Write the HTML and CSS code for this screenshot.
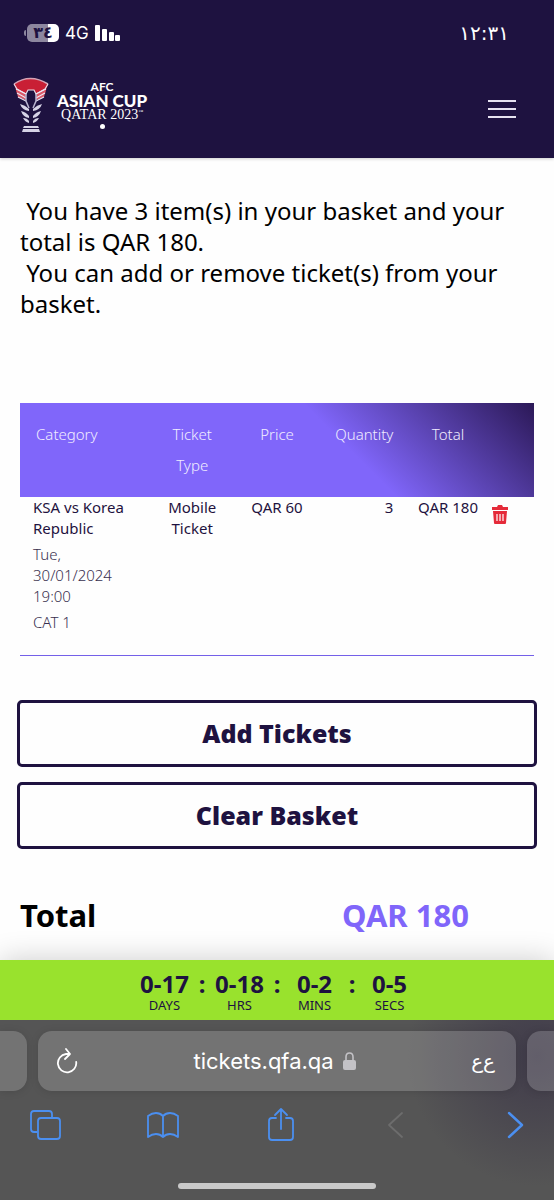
FILE: index.html
```html
<!DOCTYPE html>
<html lang="en">
<head>
    <meta charset="UTF-8">
    <meta name="viewport" content="width=device-width, initial-scale=1.0">
    <title>Basket - AFC Asian Cup Qatar 2023</title>
    <link rel="stylesheet" href="styles.css">
</head>
<body>
    <header class="header">
        <div class="status">
            <div class="status-left">
                <span class="battery"><span class="battery-level">٣٤</span></span>
                <span class="network">4G</span>
                <svg class="signal" width="26" height="17" viewBox="0 0 26 17" fill="#fff">
                    <rect x="0" y="0" width="5" height="16" rx="1"/>
                    <rect x="7" y="4" width="5" height="12" rx="1"/>
                    <rect x="14" y="7" width="5" height="9" rx="1"/>
                    <rect x="20" y="10" width="5" height="6" rx="1"/>
                </svg>
            </div>
            <span class="clock">١٢:٣١</span>
        </div>
        <div class="brand-bar">
            <a href="#" class="brand" aria-label="AFC Asian Cup Qatar 2023">
                <svg width="36" height="56" viewBox="0 0 36 56">
                    <path d="M1 7Q17-4 35 7L32 16 24 17 21 13H15L12 17 4 16Z" fill="#c91f35"/>
                    <path d="M1 7Q17-4 35 7" fill="none" stroke="#d5a3b5" stroke-width="1.5"/>
                    <path d="M1 7l3 5 9 5 2-4h6l2 4 9-5 3-5" fill="none" stroke="#e9dfea" stroke-width="1.2"/>
                    <path d="M3 13l10 4v6L5 20zM33 13l-10 4v6l8-3z" fill="#d95868"/>
                    <path d="M3 12l10 5M4 16l9 5M5 20l8 4M33 12l-10 5M32 16l-9 5M31 20l-8 4" stroke="#eee8f4" stroke-width="1.2"/>
                    <path d="M13 17v7l3 7M23 17v7l-3 7" fill="none" stroke="#b9b4d0" stroke-width="1.5"/>
                    <path d="M7 27q2 6 9 7v-2q-4-4-9-5zM29 27q-2 6-9 7v-2q4-4 9-5zM8 34q2 6 8 7v-2q-3-4-8-5zM28 34q-2 6-8 7v-2q3-4 8-5zM10 41q2 4 6 5v-2q-2-3-6-3zM26 41q-2 4-6 5v-2q2-3 6-3z" fill="#d6d3e6"/>
                    <path d="M11 49h14l1 2H10zM10 52h16l1 3H9z" fill="#d6d3e6"/>
                </svg>
                <span class="brand-text">
                    <span class="brand-afc">AFC</span>
                    <span class="brand-cup">ASIAN CUP</span>
                    <span class="brand-qatar">QATAR 2023<sup>™</sup></span>
                    <span class="brand-dot"></span>
                </span>
            </a>
            <button class="menu" aria-label="Menu"><span></span><span></span><span></span></button>
        </div>
    </header>

    <main class="basket">
        <p class="intro">&nbsp;You have 3 item(s) in your basket and your total is QAR 180.<br>&nbsp;You can add or remove ticket(s) from your basket.</p>
        <table class="items">
            <thead>
                <tr>
                    <th class="col-category">Category</th>
                    <th class="col-type">Ticket Type</th>
                    <th class="col-price">Price</th>
                    <th class="col-quantity">Quantity</th>
                    <th class="col-total">Total</th>
                    <th class="col-remove"></th>
                </tr>
            </thead>
            <tbody>
                <tr>
                    <td class="col-category">
                        <p>KSA vs Korea Republic</p>
                        <p class="detail">Tue,<br>30/01/2024<br>19:00</p>
                        <p class="detail">CAT 1</p>
                    </td>
                    <td>Mobile Ticket</td>
                    <td>QAR 60</td>
                    <td class="col-quantity">3</td>
                    <td class="col-total">QAR 180</td>
                    <td class="col-remove">
                        <button class="remove" aria-label="Remove ticket">
                            <svg width="16" height="20" viewBox="0 0 16 20">
                                <path d="M0 2h5l1-2h4l1 2h5v3H0z" fill="#e52b3a"/>
                                <path d="M1 6h14l-1 12q0 1-1 1H3q-1 0-1-1z" fill="#e52b3a"/>
                                <path d="M5 9v7M8 9v7M11 9v7" stroke="#fff" stroke-width="1.2"/>
                            </svg>
                        </button>
                    </td>
                </tr>
            </tbody>
        </table>
        <div class="actions">
            <button class="btn">Add Tickets</button>
            <button class="btn">Clear Basket</button>
        </div>
        <div class="total">
            <span>Total</span>
            <span class="total-price">QAR 180</span>
        </div>
    </main>

    <footer class="bottom">
        <div class="countdown">
            <div class="unit"><b>0-17</b><span>DAYS</span></div>
            <b class="colon">:</b>
            <div class="unit"><b>0-18</b><span>HRS</span></div>
            <b class="colon">:</b>
            <div class="unit"><b>0-2</b><span>MINS</span></div>
            <b class="colon">:</b>
            <div class="unit"><b>0-5</b><span>SECS</span></div>
        </div>
        <div class="browser">
            <div class="tabs">
                <div class="tab-side tab-prev"></div>
                <div class="address">
                    <button aria-label="Reload">
                        <svg width="22" height="26" viewBox="0 0 22 26" fill="none" stroke="#fff" stroke-width="1.8" stroke-linecap="round" stroke-linejoin="round">
                            <path d="M14 6H10A9.200 9.200 0 1 0 20.200 14M10 1l4 5-5 5"/>
                        </svg>
                    </button>
                    <span class="url">tickets.qfa.qa
                        <svg width="13" height="18" viewBox="0 0 13 18">
                            <path d="M3 9V5q0-4 3.500-4T10 5v4" fill="none" stroke="#c3c2c6" stroke-width="1.600"/>
                            <rect x="0" y="8" width="13" height="10" rx="2" fill="#c3c2c6"/>
                        </svg>
                    </span>
                    <button class="text-size" aria-label="Page settings">ع&zwnj;ع</button>
                </div>
                <div class="tab-side tab-next"></div>
            </div>
            <nav class="toolbar">
                <button aria-label="Tabs">
                    <svg width="32" height="32" viewBox="0 0 32 32">
                        <path d="M8 23H5q-3 0-3-3V5q0-3 3-3h15q3 0 3 3v3"/>
                        <rect x="9" y="9" width="22" height="21" rx="3"/>
                    </svg>
                </button>
                <button aria-label="Bookmarks">
                    <svg width="32" height="32" viewBox="0 0 32 32">
                        <path d="M16 7Q13 4 9 4T1 7v21q4-3 8-3t7 3q3-3 7-3t8 3V7q-4-3-8-3t-7 3v21"/>
                    </svg>
                </button>
                <button aria-label="Share">
                    <svg width="32" height="36" viewBox="0 0 32 36">
                        <path d="M11 11H7q-3 0-3 3v16q0 3 3 3h18q3 0 3-3V14q0-3-3-3h-4M16 22V2M10 8l6-6 6 6"/>
                    </svg>
                </button>
                <button aria-label="Back" disabled>
                    <svg width="32" height="32" viewBox="0 0 32 32"><path d="M20 4L7 16l13 12"/></svg>
                </button>
                <button aria-label="Forward">
                    <svg width="32" height="32" viewBox="0 0 32 32"><path class="forward" d="M9 4l13 12L9 28"/></svg>
                </button>
            </nav>
            <div class="home-indicator"></div>
        </div>
    </footer>
</body>
</html>
```
FILE: styles.css
```css
* {
    box-sizing: border-box;
}
body {
    font-family: "Noto Sans", "DejaVu Sans", sans-serif;
    margin: 0;
    min-height: 100vh;
    display: flex;
    flex-direction: column;
    background: #fefefe;
    color: #1e1240;
}
p {
    margin: 0;
}
button {
    font-family: inherit;
    background: none;
    border: 0;
    padding: 0;
    cursor: pointer;
}
svg {
    display: block;
}
.header {
    background: #1e1240;
    height: 158px;
    color: #fff;
    box-shadow: 0 1px 3px rgba(0, 0, 0, 0.2);
}
.status {
    display: flex;
    justify-content: space-between;
    align-items: center;
    height: 66px;
    padding: 0 45px 0 24px;
}
.status-left {
    display: flex;
    align-items: center;
    gap: 6px;
}
.battery {
    display: flex;
    align-items: center;
}
.battery::before {
    content: "";
    width: 2px;
    height: 6px;
    margin-right: 1px;
    border-radius: 2px 0 0 2px;
    background: #8d879f;
}
.battery-level {
    width: 32px;
    height: 18px;
    border-radius: 5px;
    background: linear-gradient(to right, #8d879f 65%, #fff 65%);
    color: #1e1240;
    font: bold 16px/18px "DejaVu Sans", sans-serif;
    text-align: center;
}
.network {
    font: 17px/20px Inter, sans-serif;
}
.clock {
    font: 20px/26px "DejaVu Sans", sans-serif;
}
.brand-bar {
    display: flex;
    justify-content: space-between;
    align-items: flex-start;
    padding: 11px 38px 0 13px;
}
.brand {
    display: flex;
    gap: 8px;
    color: #fff;
    text-decoration: none;
}
.brand-text {
    display: flex;
    flex-direction: column;
    align-items: center;
    padding-top: 4px;
}
.brand-afc {
    font: bold 12px/12px Lato, sans-serif;
}
.brand-cup {
    font: 900 17px/15px Lato, sans-serif;
}
.brand-qatar {
    font: 14px/13px "Liberation Serif", serif;
}
.brand-qatar sup {
    font-size: 5px;
    line-height: 0;
}
.brand-dot {
    width: 5px;
    height: 5px;
    margin-top: 3px;
    border-radius: 50%;
    background: #fff;
}
.menu {
    display: flex;
    flex-direction: column;
    gap: 6px;
    margin-top: 23px;
}
.menu span {
    width: 28px;
    height: 2px;
    background: #e6e2f0;
}
.basket {
    padding: 37px 20px 0;
}
.intro {
    color: #000;
    font-size: 24px;
    line-height: 31px;
}
.items {
    width: 100%;
    margin-top: 84px;
    table-layout: fixed;
    border-collapse: collapse;
    font-size: 15px;
    line-height: 21px;
}
.items thead {
    background: linear-gradient(45deg, #8066fa 62%, #2b1856);
}
.items th {
    height: 94px;
    padding: 16px 8px 0;
    color: #f1edff;
    font-weight: 300;
    line-height: 31px;
    vertical-align: top;
}
.items td {
    height: 158px;
    padding: 0 4px;
    border-bottom: 1px solid #7460e8;
    text-align: center;
    vertical-align: top;
}
.items .col-category {
    width: 25%;
    padding-left: 13px;
    text-align: left;
}
.items th.col-category {
    padding-left: 16px;
}
.col-type {
    width: 17%;
}
.col-price {
    width: 16%;
}
.items .col-quantity {
    width: 16%;
    padding-right: 7px;
    text-align: right;
}
.items .col-total {
    width: 17%;
    padding-left: 8px;
    padding-right: 0;
}
.items .col-remove {
    width: 9%;
    padding: 0 0 0 4px;
    text-align: left;
}
.items .detail {
    margin-top: 5px;
    color: #39304f;
    font-weight: 300;
}
.remove {
    margin-top: 8px;
}
.actions {
    display: flex;
    flex-direction: column;
    gap: 15px;
    margin: 44px -3px 0;
}
.btn {
    height: 67px;
    border: 3px solid #1e1240;
    border-radius: 5px;
    color: #1e1240;
    font-size: 25px;
    font-weight: 900;
}
.total {
    display: grid;
    grid-template-columns: 322px 1fr;
    margin-top: 45px;
    color: #000;
    font-size: 31px;
    font-weight: bold;
    line-height: 42px;
}
.total-price {
    color: #8066fa;
}
.bottom {
    margin-top: auto;
}
.countdown {
    display: flex;
    justify-content: center;
    height: 60px;
    padding-top: 10px;
    background: #99e22d;
    box-shadow: 0 0 30px rgba(0, 0, 0, 0.2);
    font-size: 24px;
    line-height: 27px;
}
.unit {
    display: flex;
    flex-direction: column;
    align-items: center;
    width: 50px;
}
.unit span {
    font-size: 13px;
    line-height: 16px;
}
.colon {
    width: 25px;
    text-align: center;
}
.browser {
    position: relative;
    height: 180px;
    padding-top: 11px;
    background: radial-gradient(circle at 97% 20%, #403b4a, #555 130px);
}
.tabs {
    display: flex;
    gap: 11px;
}
.tab-side,
.address {
    height: 60px;
    background: rgba(255, 255, 255, 0.18);
    box-shadow: 0 1px 8px rgba(0, 0, 0, 0.12);
}
.tab-side {
    width: 27px;
}
.tab-prev {
    border-radius: 0 14px 14px 0;
}
.tab-next {
    border-radius: 14px 0 0 14px;
}
.address {
    flex: 1;
    display: flex;
    align-items: center;
    justify-content: space-between;
    padding: 0 21px 0 18px;
    border-radius: 14px;
    color: #fff;
}
.url {
    display: flex;
    align-items: center;
    gap: 9px;
    font: 22px/28px Inter, sans-serif;
}
.text-size {
    color: #fff;
    font: 20px/24px "DejaVu Sans", sans-serif;
}
.toolbar {
    display: flex;
    justify-content: space-between;
    align-items: center;
    height: 68px;
    padding: 0 22px 0 29px;
}
.toolbar svg {
    fill: none;
    stroke: #4b8ff0;
    stroke-width: 1.8;
    stroke-linecap: round;
    stroke-linejoin: round;
}
.toolbar button:disabled svg {
    stroke: #6d6d6d;
}
.toolbar .forward {
    stroke-width: 2.4;
}
.home-indicator {
    width: 198px;
    height: 6px;
    margin: 24px auto 0;
    border-radius: 3px;
    background: #c9c9c9;
}
```
